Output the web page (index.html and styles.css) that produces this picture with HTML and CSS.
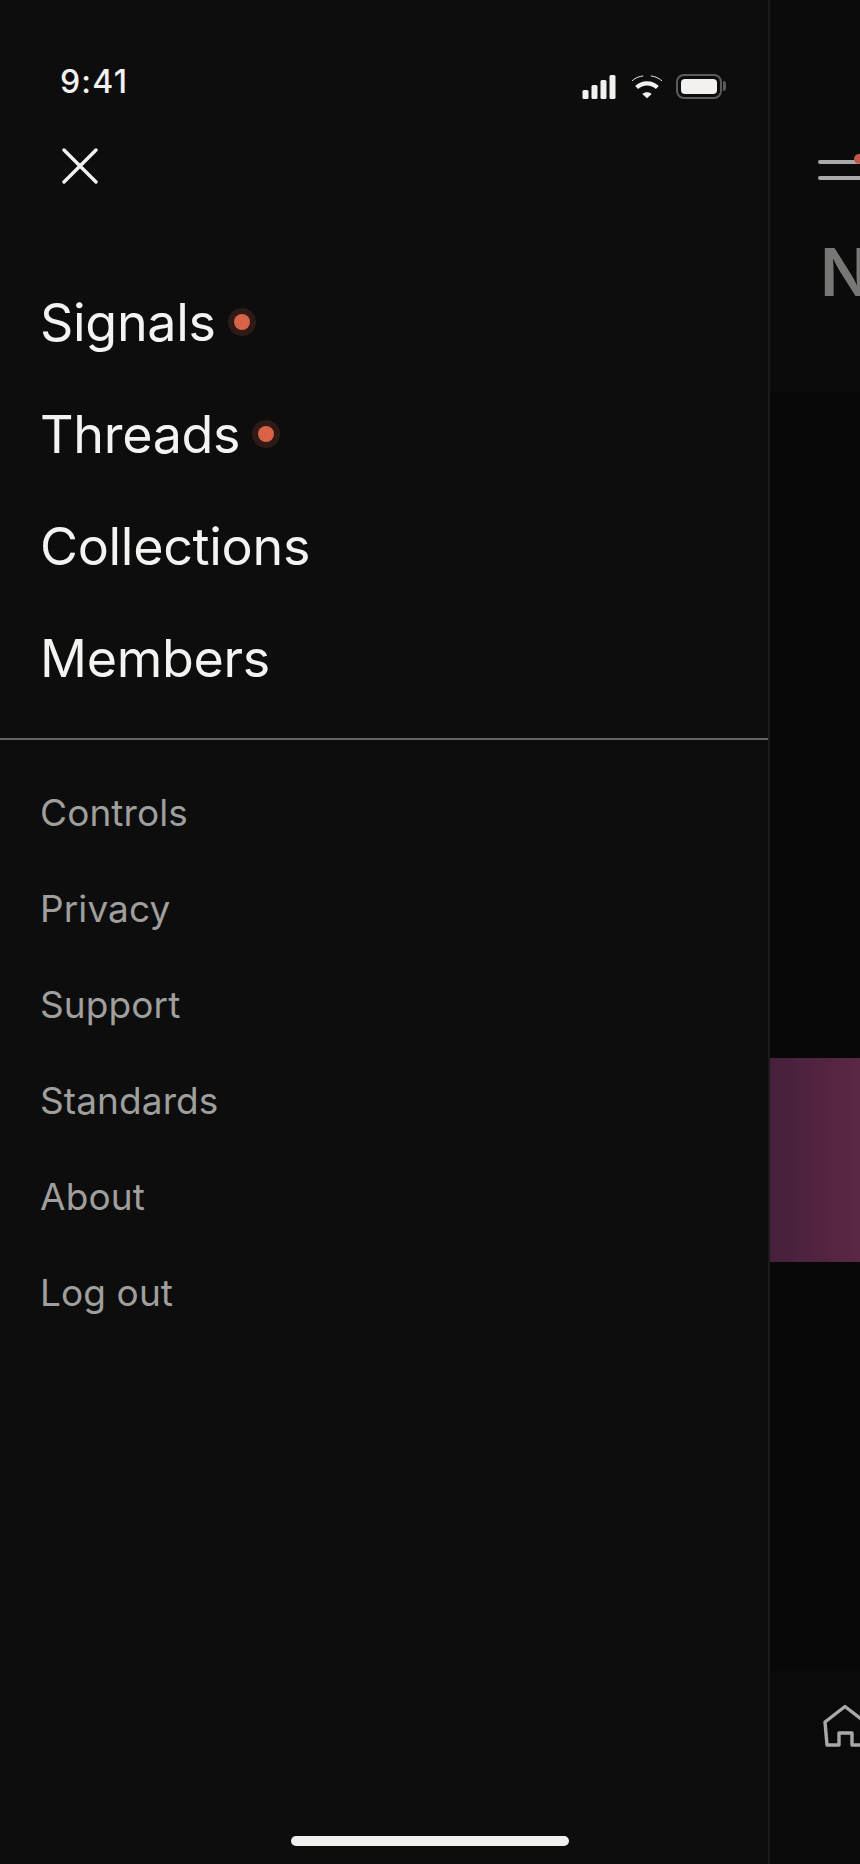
FILE: index.html
```html
<!DOCTYPE html>
<html lang="en">
<head>
<meta charset="utf-8">
<title>Menu</title>
<link rel="stylesheet" href="styles.css">
</head>
<body>
<div class="screen">
  <aside class="drawer">
    <div class="status">
      <span class="time">9:41</span>
      <div class="status-icons">
        <svg class="signal" width="34" height="24" viewBox="0 0 33 24"><rect x="0" y="15" width="6" height="9" rx="1.5"/><rect x="9" y="10" width="6" height="14" rx="1.5"/><rect x="18" y="5" width="6" height="19" rx="1.5"/><rect x="27" y="0" width="6" height="24" rx="1.5"/></svg>
        <svg class="wifi" width="32" height="24" viewBox="0 0 34 24" fill="none"><path d="M1 5.5C5 1.8 10 0.5 13 0.3M33 5.5C29 1.8 24 0.5 21 0.3" stroke="#f2f1ef" stroke-width="1"/><path d="M6 12.5C12 6.7 22 6.7 28 12.5" stroke="#f2f1ef" stroke-width="4.5"/><path d="M12 19.5L17 24L22 19.5C19 17 15 17 12 19.5Z" fill="#f2f1ef"/></svg>
        <div class="battery"><div class="battery-fill"></div></div>
      </div>
    </div>
    <button class="close" aria-label="Close">
      <svg width="36" height="36" viewBox="0 0 36 36" fill="none" stroke="#f4f3f1" stroke-width="3.4" stroke-linecap="round"><path d="M2 2L34 34M34 2L2 34"/></svg>
    </button>
    <nav class="primary">
      <a class="primary-item">Signals<span class="dot"></span></a>
      <a class="primary-item">Threads<span class="dot"></span></a>
      <a class="primary-item">Collections</a>
      <a class="primary-item">Members</a>
    </nav>
    <nav class="secondary">
      <a class="secondary-item">Controls</a>
      <a class="secondary-item">Privacy</a>
      <a class="secondary-item">Support</a>
      <a class="secondary-item">Standards</a>
      <a class="secondary-item">About</a>
      <a class="secondary-item">Log out</a>
    </nav>
  </aside>
  <main class="behind">
    <header class="behind-head">
      <div class="burger"><i class="burger-line"></i><i class="burger-line"></i><span class="burger-dot"></span></div>
      <h1 class="behind-title">N</h1>
    </header>
    <section class="behind-body">
      <div class="banner"></div>
    </section>
    <footer class="tabbar">
      <svg width="44" height="44" viewBox="0 0 44 44" fill="none" stroke="#a9a9a7" stroke-width="3.4" stroke-linejoin="round"><path d="M2 18L22 2.5L42 18L40 41H29V29H16V41H4Z"/></svg>
    </footer>
  </main>
  <div class="home-indicator"></div>
</div>
</body>
</html>
```
FILE: styles.css
```css
* { box-sizing: border-box; }
html, body { margin: 0; padding: 0; background: #0d0d0d; }
.screen {
  position: relative;
  display: flex;
  width: 860px;
  height: 1864px;
  overflow: hidden;
  font-family: Inter, "Liberation Sans", sans-serif;
}
.drawer {
  flex: 0 0 770px;
  display: flex;
  flex-direction: column;
  background: #0d0d0d;
  border-right: 2px solid #1b1b1b;
}
.status {
  display: flex;
  justify-content: space-between;
  align-items: flex-start;
  height: 148px;
  padding: 63px 46px 0 60px;
}
.time {
  font-size: 32px;
  line-height: 37px;
  font-weight: 550;
  letter-spacing: 1.2px;
  color: #f2f1ef;
}
.status-icons {
  display: flex;
  align-items: center;
  gap: 14px;
  margin-top: 11px;
}
.wifi { position: relative; left: 1px; }
.signal { fill: #f2f1ef; }
.battery {
  position: relative;
  width: 46px;
  height: 25px;
  padding: 3px;
  border: 2.5px solid #5c5c5c;
  border-radius: 8px;
}
.battery::after {
  content: "";
  position: absolute;
  right: -6px;
  top: 5px;
  width: 3px;
  height: 10px;
  background: #5c5c5c;
  border-radius: 0 3px 3px 0;
}
.battery-fill {
  width: 100%;
  height: 100%;
  background: #f2f1ef;
  border-radius: 4px;
}
.close {
  display: block;
  width: 36px;
  height: 36px;
  margin-left: 62px;
  padding: 0;
  border: 0;
  background: none;
}
.close svg { display: block; }
.primary {
  display: flex;
  flex-direction: column;
  margin-top: 82px;
  padding-bottom: 24px;
  border-bottom: 2px solid #646464;
}
.primary-item {
  display: flex;
  align-items: center;
  height: 112px;
  padding-left: 40px;
  font-size: 52px;
  letter-spacing: -0.3px;
  color: #f4f3f1;
}
.dot {
  width: 16px;
  height: 16px;
  margin-left: 18px;
  border-radius: 50%;
  background: #d96344;
  box-shadow: 0 0 0 6px #2e1b17;
}
.secondary {
  display: flex;
  flex-direction: column;
  padding-top: 24px;
}
.secondary-item {
  display: flex;
  align-items: center;
  height: 96px;
  padding-left: 40px;
  font-size: 37px;
  letter-spacing: 0.1px;
  color: #9f9f9d;
}
.behind {
  flex: 1;
  display: flex;
  flex-direction: column;
  min-width: 0;
  overflow: hidden;
  background: #080808;
}
.behind-head {
  height: 392px;
  padding: 160px 0 0 48px;
  background: #0b0b0b;
}
.burger {
  position: relative;
  display: flex;
  flex-direction: column;
  gap: 12px;
  width: 60px;
}
.burger-line {
  display: block;
  height: 4px;
  background: #a9a9a7;
  border-radius: 2px;
}
.burger-dot {
  position: absolute;
  left: 36px;
  top: -6px;
  width: 10px;
  height: 10px;
  border-radius: 50%;
  background: #c0584a;
}
.behind-title {
  margin: 52px 0 0 2px;
  font-size: 66px;
  line-height: 80px;
  font-weight: 600;
  white-space: nowrap;
  color: #777776;
}
.behind-body {
  flex: 1;
  padding-top: 666px;
}
.banner {
  height: 204px;
  background: linear-gradient(90deg, #45203c, #5c2743);
}
.tabbar {
  height: 194px;
  padding: 34px 0 0 53px;
  background: #0a0a0a;
}
.tabbar svg { display: block; }
.home-indicator {
  position: absolute;
  left: 291px;
  top: 1836px;
  width: 278px;
  height: 10px;
  border-radius: 5px;
  background: #f0f0ee;
}
```
